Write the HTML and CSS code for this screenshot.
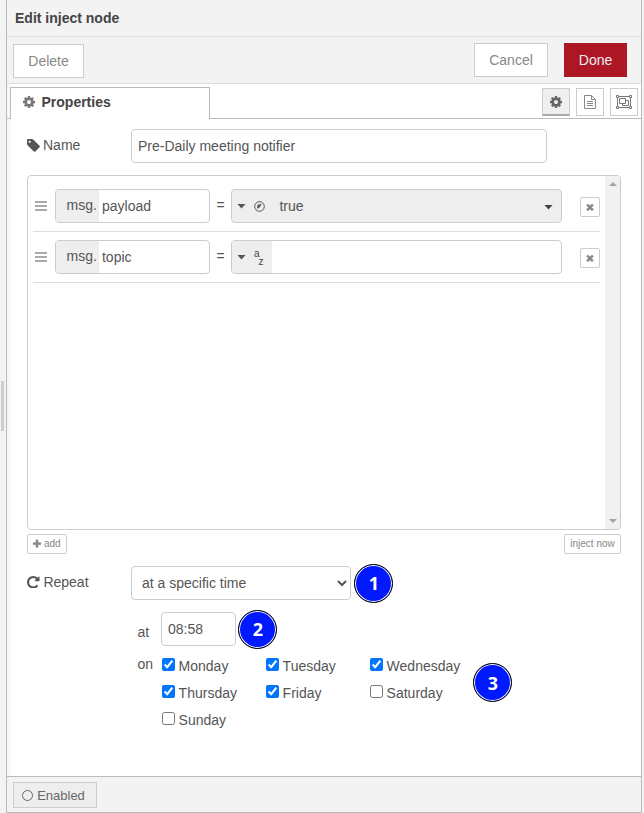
FILE: index.html
```html
<!DOCTYPE html>
<html lang="en">
<head>
<meta charset="utf-8">
<title>Edit inject node</title>
<link rel="stylesheet" href="styles.css">
</head>
<body>
<svg class="defs" width="0" height="0">
  <symbol id="cog" viewBox="128 128 1536 1536"><path d="M1152 896q0-106-75-181t-181-75-181 75-75 181 75 181 181 75 181-75 75-181zm512-109v222q0 12-8 23t-20 13l-185 28q-19 54-39 91 35 50 107 138 10 12 10 25t-9 23q-27 37-99 108t-94 71q-12 0-26-9l-138-108q-44 23-91 38-16 136-29 186-7 28-36 28h-222q-14 0-24.5-8.5t-11.5-21.5l-28-184q-49-16-90-37l-141 107q-10 9-25 9-14 0-25-11-126-114-165-168-7-10-7-23 0-12 8-23 15-21 51-66.5t54-70.5q-27-50-41-99l-183-27q-13-2-21-12.5t-8-23.5v-222q0-12 8-23t19-13l186-28q14-46 39-92-40-57-107-138-10-12-10-24 0-10 9-23 26-36 98.5-107.5t94.5-71.5q13 0 26 10l138 107q44-23 91-38 16-136 29-186 7-28 36-28h222q14 0 24.5 8.5t11.5 21.5l28 184q49 16 90 37l142-107q9-9 24-9 13 0 25 10 129 119 165 170 7 8 7 22 0 12-8 23-15 21-51 66.5t-54 70.5q26 50 41 98l183 28q13 2 21 12.5t8 23.5z"/></symbol>
  <symbol id="times" viewBox="0 0 1792 1792"><path d="M1490 1322q0 40-28 68l-136 136q-28 28-68 28t-68-28l-294-294-294 294q-28 28-68 28t-68-28l-136-136q-28-28-28-68t28-68l294-294-294-294q-28-28-28-68t28-68l136-136q28-28 68-28t68 28l294 294 294-294q28-28 68-28t68 28l136 136q28 28 28 68t-28 68l-294 294 294 294q28 28 28 68z"/></symbol>
</svg>
<div class="separator"><span class="grip"></span></div>
<main class="tray">
  <header class="title">Edit inject node</header>
  <div class="toolbar">
    <button class="btn delete">Delete</button>
    <button class="btn cancel">Cancel</button>
    <button class="btn done">Done</button>
  </div>
  <nav class="tabs">
    <div class="tab"><svg class="icon cog"><use href="#cog"/></svg>Properties</div>
    <div class="tab-line"></div>
    <div class="tab-buttons">
      <button class="tool active"><svg class="icon cog"><use href="#cog"/></svg></button>
      <button class="tool"><svg width="12" height="14" viewBox="0 0 12 14" fill="none" stroke="currentColor"><path d="M.5.5H7.5L11.5 4.5V13.5H.5zM7.5.5V4.5H11.5M3 6.5H9M3 8.5H9M3 10.5H9"/></svg></button>
      <button class="tool group"><svg width="16" height="14" viewBox="0 0 16 14" fill="none" stroke="currentColor"><path d="M2.5 1.5H13.5M2.5 12.5H13.5M1.5 2.5V11.5M14.5 2.5V11.5M.5.5H2.5V2.5H.5zM13.5.5H15.5V2.5H13.5zM.5 11.5H2.5V13.5H.5zM13.5 11.5H15.5V13.5H13.5zM3.5 3.5H9.5V8.5H3.5zM9.5 5.5H12.5V10.5H6.5V8.5"/></svg></button>
    </div>
  </nav>
  <section class="form">
    <div class="row">
      <label class="label"><svg class="icon tag" viewBox="128 128 1536 1536"><path d="M576 448q0-53-37.5-90.5t-90.5-37.5-90.5 37.5-37.5 90.5 37.5 90.5 90.5 37.5 90.5-37.5 37.5-90.5zm1067 576q0 53-37 90l-491 492q-39 37-91 37-53 0-90-37l-715-716q-38-37-64.5-101t-26.5-117v-416q0-52 38-90t90-38h416q53 0 117 26.5t102 64.5l715 714q37 39 37 91z"/></svg>Name</label>
      <input class="field name" type="text" value="Pre-Daily meeting notifier">
    </div>
    <div class="list">
      <div class="items">
        <div class="item">
          <span class="handle"></span>
          <div class="typed prop"><span class="prefix">msg.</span><span class="value">payload</span></div>
          <span class="equals">=</span>
          <div class="typed filled"><span class="type"><i class="caret"></i><svg width="11" height="11" viewBox="0 0 11 11"><circle cx="5.5" cy="5.5" r="4.8" fill="none" stroke="currentColor"/><path d="M7.8 3.1 5.5 6.6 4.4 6.9 3.2 8V5.3Q3.5 3 7.8 3.1Z" fill="currentColor"/></svg></span><span class="value">true</span><i class="caret end"></i></div>
          <button class="remove"><svg><use href="#times"/></svg></button>
        </div>
        <div class="item">
          <span class="handle"></span>
          <div class="typed prop"><span class="prefix">msg.</span><span class="value">topic</span></div>
          <span class="equals">=</span>
          <div class="typed"><span class="type"><i class="caret"></i><span class="az"><span>a</span><span>z</span></span></span></div>
          <button class="remove"><svg><use href="#times"/></svg></button>
        </div>
      </div>
      <div class="scrollbar"><i></i><i class="down"></i></div>
    </div>
    <div class="list-actions">
      <button class="small"><svg viewBox="0 0 1792 1792"><path d="M1600 736v192q0 40-28 68t-68 28h-416v416q0 40-28 68t-68 28h-192q-40 0-68-28t-28-68v-416h-416q-40 0-68-28t-28-68v-192q0-40 28-68t68-28h416v-416q0-40 28-68t68-28h192q40 0 68 28t28 68v416h416q40 0 68 28t28 68z"/></svg>add</button>
      <button class="small inject">inject now</button>
    </div>
    <div class="row repeat">
      <label class="label"><svg class="icon" viewBox="128 128 1536 1536"><path d="M1664 256v448q0 26-19 45t-45 19h-448q-42 0-59-40-17-39 14-69l138-138q-148-137-349-137-104 0-198.5 40.5t-163.5 109.5-109.5 163.5-40.5 198.5 40.5 198.5 109.5 163.5 163.5 109.5 198.5 40.5q119 0 225-52t179-147q7-10 23-12 15 0 25 9l137 138q9 8 9.5 20.5t-7.5 22.5q-109 132-264 204.5t-327 72.5q-156 0-298-61t-245-164-164-245-61-298 61-298 164-245 245-164 298-61q147 0 284.5 55.5t244.5 156.5l130-129q29-31 70-14 39 17 39 59z"/></svg>Repeat</label>
      <select class="field"><option>at a specific time</option></select>
      <span class="badge">1</span>
    </div>
    <div class="row time">
      <span class="at">at</span>
      <input class="field" type="text" value="08:58">
      <span class="badge">2</span>
    </div>
    <div class="row days-row">
      <span class="on">on</span>
      <div class="days">
        <label><input type="checkbox" checked>Monday</label>
        <label><input type="checkbox" checked>Tuesday</label>
        <label><input type="checkbox" checked>Wednesday</label>
        <label><input type="checkbox" checked>Thursday</label>
        <label><input type="checkbox" checked>Friday</label>
        <label><input type="checkbox">Saturday</label>
        <label><input type="checkbox">Sunday</label>
      </div>
      <span class="badge">3</span>
    </div>
  </section>
  <footer class="footer"><button class="enabled"><i></i>Enabled</button></footer>
</main>
</body>
</html>
```
FILE: styles.css
```css
* { box-sizing: border-box; }
body {
  margin: 0;
  width: 644px;
  height: 813px;
  display: flex;
  overflow: hidden;
  background: #f3f3f3;
  color: #555;
  font: 14px/20px "Liberation Sans", Arial, sans-serif;
}
.defs { display: none; }
svg { flex: none; }
button, input, select { font: inherit; color: inherit; margin: 0; }
button {
  display: flex;
  align-items: center;
  justify-content: center;
  padding: 0;
  background: #fff;
  border: 1px solid #ccc;
  color: #888;
}
.separator { width: 6px; display: flex; align-items: center; padding: 0 0 2px 1px; }
.grip { width: 3px; height: 50px; background: #ccc; }
.tray {
  width: 636px;
  border: 1px solid #bbb;
  border-top: 0;
  background: #fff;
  display: flex;
  flex-direction: column;
  box-shadow: inset 6px 0 6px -5px rgba(0, 0, 0, .08);
}
.title {
  height: 37px;
  padding: 8px;
  border-bottom: 1px solid #ddd;
  background: #f3f3f3;
  color: #444;
  font-weight: bold;
}
.toolbar {
  height: 47px;
  display: flex;
  align-items: flex-start;
  padding: 6px 14px 0 6px;
  border-bottom: 1px solid #ddd;
  background: #f3f3f3;
}
.btn { height: 34px; }
.delete { width: 71px; margin-top: 1px; }
.cancel { width: 74px; margin: 0 16px 0 auto; }
.done { width: 63px; background: #ad1625; border-color: #ad1625; color: #eee; }
.tabs { height: 35px; display: flex; padding-top: 3px; border-bottom: 1px solid #bbb; }
.tab {
  width: 200px;
  height: 32px;
  margin-left: 3px;
  padding: 0 12px 3px;
  display: flex;
  align-items: center;
  border: 1px solid #bbb;
  border-bottom: 0;
  background: #fff;
  color: #444;
  font-weight: bold;
}
.icon { width: 14px; height: 14px; fill: currentColor; }
.icon.cog { width: 12px; height: 12px; }
.label .icon.tag { width: 13px; height: 13px; margin-right: 3px; }
.tab .icon { margin: 0 6.5px 0 0; fill: #777; }
.tab-line { flex: 1; }
.tab-buttons { display: flex; gap: 6px; padding: 1px 3px 0 0; }
.tool { width: 28px; height: 28px; }
.tool.group { color: #777; }
.tool.active { background: #efefef; border-bottom: 2px solid #aaa; color: #666; }
.form { flex: 1; padding: 10px 20px 0; }
.row { display: flex; align-items: flex-start; }
.label { width: 104px; height: 32px; display: flex; align-items: center; }
.repeat .icon { width: 12.5px; height: 12.5px; margin-right: 3.9px; }
.field { height: 34px; border: 1px solid #ccc; border-radius: 4px; background: #fff; padding: 0 6px; }
.name { width: 416px; padding-left: 6px; }
.list {
  width: 594px;
  height: 355px;
  margin-top: 12px;
  display: flex;
  border: 1px solid #ccc;
  border-radius: 4px;
  overflow: hidden;
}
.items { width: 567px; margin: 5px 5px 0; }
.item { height: 51px; display: flex; align-items: center; border-bottom: 1px solid #ddd; }
.handle {
  width: 12px;
  height: 10px;
  margin: 0 7.6px 0 2.4px;
  border: solid #aaa;
  border-width: 2px 0;
  background: linear-gradient(#aaa, #aaa) center / 100% 2px no-repeat;
}
.typed {
  width: 331px;
  height: 34px;
  display: flex;
  align-items: stretch;
  border: 1px solid #ccc;
  border-radius: 4px;
  overflow: hidden;
  line-height: 32px;
}
.prop { width: 155px; }
.prefix { width: 43px; padding-left: 10.5px; background: #eee; line-height: 30px; }
.prop .value { padding-left: 3px; }
.equals { width: 21px; text-align: center; padding-bottom: 3px; }
.type { width: 40px; display: flex; align-items: center; padding-left: 5px; background: #eee; }
.caret { border: solid transparent; border-width: 5px 4.5px 0; border-top-color: #555; }
.type .caret { width: 9px; height: 5px; border: 0; background: #555; clip-path: polygon(0 0, 100% 0, 50% 100%); margin-right: 8px; }
.filled { background: #eee; align-items: center; }
.filled .value { flex: 1; padding-left: 7.5px; }
.caret.end { width: 9px; height: 5px; border: 0; background: #444; clip-path: polygon(0 0, 100% 0, 50% 100%); margin: 2px 8px 0 0; }
.az { display: flex; margin-top: 6px; font-size: 10px; line-height: 12px; color: #444; }
.az span { margin-top: -4px; }
.az span + span { margin-top: 4px; margin-left: -1px; }
.remove { width: 20px; height: 20px; margin: 1px 0 0 auto; border-radius: 2px; }
.remove svg { width: 10px; height: 10px; fill: currentColor; stroke: currentColor; stroke-width: 80; }
.scrollbar {
  width: 15px;
  background: #f1f1f1;
  display: flex;
  flex-direction: column;
  justify-content: space-between;
  align-items: center;
  padding: 6px 0;
}
.scrollbar i { border: solid transparent; border-width: 0 4px 4px; border-bottom-color: #a3a3a3; }
.scrollbar .down { border-width: 4px 4px 0; border-top-color: #a3a3a3; }
.list-actions { display: flex; justify-content: space-between; margin-top: 4px; }
.small { width: 40px; height: 20px; border-radius: 2px; font-size: 10px; }
.small svg { width: 10px; height: 10px; margin: 0 1.5px 1px -1px; fill: currentColor; stroke: currentColor; stroke-width: 60; }
.small.inject { width: 57px; }
.repeat { margin-top: 12px; }
select.field { width: 220px; }
.badge {
  width: 39px;
  height: 39px;
  margin: -2.5px 0 -3px 3.4px;
  display: flex;
  align-items: center;
  justify-content: center;
  border: 1px solid #000;
  border-radius: 50%;
  background: #0019ff;
  box-shadow: inset 0 0 0 1px #fff;
  color: #fff;
  font: bold 18px/20px "Noto Sans", sans-serif;
}
.time { margin-top: 12px; padding-left: 110.5px; }
.time .field { width: 75px; }
.at { width: 23.5px; padding-top: 10px; }
.time .badge { margin-left: 2.4px; }
.days-row { margin-top: 8px; padding-left: 110.5px; }
.on { width: 24.5px; }
.days { width: 312px; display: grid; grid-template-columns: repeat(3, 104px); grid-auto-rows: 27px; padding-top: 2px; }
.days label { display: flex; align-items: flex-start; white-space: nowrap; }
.days input { width: 13px; height: 13px; margin: 2px 3.6px 0 0; }
.days-row .badge { margin: 9.4px 0 0 -.6px; }
.footer { height: 36px; padding: 5px 6px 0; border-top: 1px solid #bbb; background: #f3f3f3; }
.enabled { width: 84px; height: 26px; background: #eee; color: #666; font-size: 13px; padding: 1px 3px 0 0; }
.enabled i { width: 11px; height: 11px; margin-right: 4px; border: 1px solid #666; border-radius: 50%; }
```
